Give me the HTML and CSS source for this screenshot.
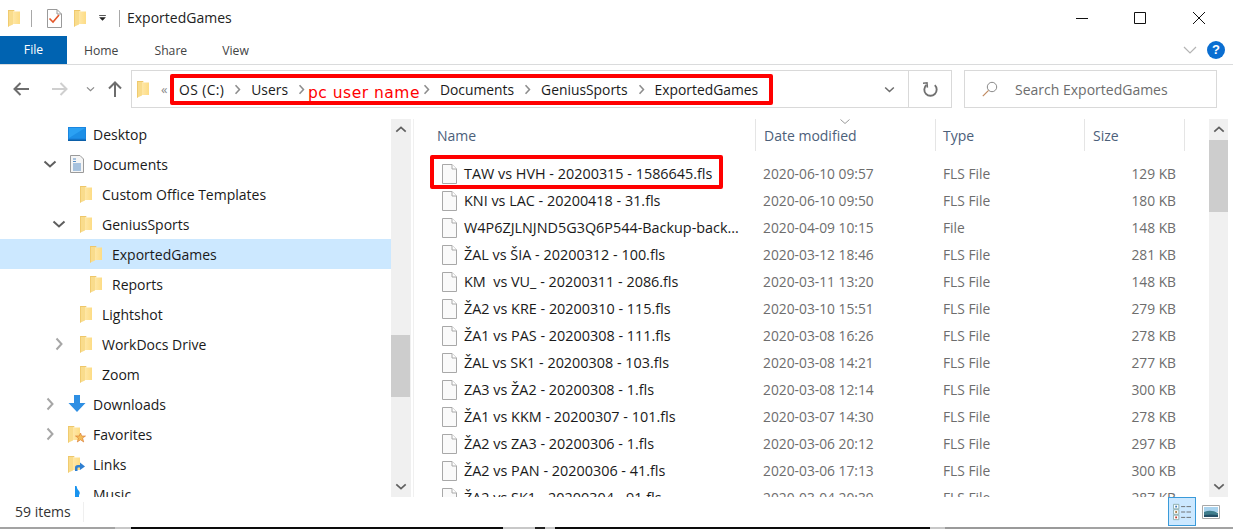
FILE: index.html
```html
<!DOCTYPE html>
<html lang="en">
<head>
<meta charset="utf-8">
<title>ExportedGames</title>
<link rel="stylesheet" href="styles.css">
</head>
<body>
<svg class="defs" width="0" height="0" aria-hidden="true">
  <defs>
    <linearGradient id="fg" x1="0" y1="0" x2="1" y2="0"><stop offset="0" stop-color="#ffeab0"/><stop offset="1" stop-color="#fddc85"/></linearGradient>
    <symbol id="folder" viewBox="0 0 12 18">
      <path d="M3 2.5H12V15H3z" fill="url(#fg)"/>
      <path d="M0 1H6L6.6 2.5H5V15.5L0 17.8z" fill="#f9dc8c"/>
      <path d="M0 1H6L6.4 2H.8V17.4L0 17.8z" fill="#eec76a"/>
    </symbol>
    <symbol id="file" viewBox="0 0 15 20">
      <path d="M.5.5H10L14.5 5V19.5H.5z" fill="#fafafa" stroke="#a8a8a8"/>
      <path d="M10 .5V5H14.5" fill="#fff" stroke="#a8a8a8"/>
    </symbol>
    <symbol id="down" viewBox="0 0 14 8"><path d="M1.5 1.5L7 6.5L12.5 1.5" fill="none" stroke="currentColor" stroke-width="2"/></symbol>
    <symbol id="right" viewBox="0 0 8 14"><path d="M1.5 1.5L6.5 7L1.5 12.5" fill="none" stroke="currentColor" stroke-width="2"/></symbol>
  </defs>
</svg>

<header class="titlebar">
  <svg class="qa-folder first"><use href="#folder"/></svg>
  <span class="qa-sep sep-a"></span>
  <svg class="qa-check" viewBox="0 0 15 19">
    <path d="M.5.5H10L14.5 5V18.5H.5z" fill="#fff" stroke="#9a9a9a"/>
    <path d="M10 .5V5H14.5" fill="none" stroke="#9a9a9a"/>
    <path d="M2.5 9.5L6 13L12 6" fill="none" stroke="#e4572a" stroke-width="1.6"/>
  </svg>
  <svg class="qa-folder second"><use href="#folder"/></svg>
  <svg class="qa-drop" viewBox="0 0 9 8"><path d="M0 0H9V1H0zM0 3H9L4.5 7.5z" fill="#222"/></svg>
  <span class="qa-sep sep-b"></span>
  <span class="title">ExportedGames</span>
  <div class="winbtns">
    <svg class="win win-min" viewBox="0 0 12 12"><path d="M0 6.5H12" stroke="#111" stroke-width="1"/></svg>
    <svg class="win win-max" viewBox="0 0 12 12"><path d="M.5.5H11.5V11.5H.5z" fill="none" stroke="#111"/></svg>
    <svg class="win win-close" viewBox="0 0 12 12"><path d="M0 0L12 12M12 0L0 12" stroke="#111" stroke-width="1"/></svg>
  </div>
</header>

<nav class="tabs">
  <span class="tab tab-file">File</span>
  <span class="tab tab-home">Home</span>
  <span class="tab tab-share">Share</span>
  <span class="tab tab-view">View</span>
  <svg class="ribbon-chev" viewBox="0 0 14 8"><path d="M1 1L7 7L13 1" fill="none" stroke="#b4b4b4" stroke-width="1.2"/></svg>
  <span class="help">?</span>
</nav>

<section class="addr">
  <svg class="arrow a-back" viewBox="0 0 16 14"><path d="M16 7H1.5M7.5 1L1.5 7L7.5 13" fill="none" stroke="#6d6d6d" stroke-width="2"/></svg>
  <svg class="arrow a-fwd" viewBox="0 0 16 14"><path d="M0 7H14.5M8.5 1L14.5 7L8.5 13" fill="none" stroke="#cfcfcf" stroke-width="2"/></svg>
  <svg class="a-recent"><use href="#down"/></svg>
  <svg class="a-up" viewBox="0 0 14 16"><path d="M7 16V1.5M1 7.5L7 1.5L13 7.5" fill="none" stroke="#6d6d6d" stroke-width="2"/></svg>
  <div class="crumbs">
    <svg class="crumb-folder"><use href="#folder"/></svg>
    <span class="more">«</span>
    <span class="crumb c-os">OS (C:)</span>
    <svg class="crumb-chev"><use href="#right"/></svg>
    <span class="crumb">Users</span>
    <svg class="crumb-chev"><use href="#right"/></svg>
    <span class="pcuser">pc user name</span>
    <svg class="crumb-chev"><use href="#right"/></svg>
    <span class="crumb">Documents</span>
    <svg class="crumb-chev"><use href="#right"/></svg>
    <span class="crumb">GeniusSports</span>
    <svg class="crumb-chev"><use href="#right"/></svg>
    <span class="crumb">ExportedGames</span>
    <svg class="crumb-drop"><use href="#down"/></svg>
    <span class="refresh">
      <svg viewBox="0 0 16 16"><path d="M12.6 3.4A6.6 6.6 0 1 1 3.6 3.2" fill="none" stroke="#707070" stroke-width="2"/><path d="M8.5 .5L13.8 .8L13.5 6" fill="none" stroke="#707070" stroke-width="1.6" transform="translate(-9.5 2) rotate(-8)"/></svg>
    </span>
  </div>
  <div class="search">
    <svg class="search-ico" viewBox="0 0 16 16"><circle cx="10" cy="6" r="4.7" fill="none" stroke="#8a8a8a"/><path d="M6.6 9.4L.8 15.2" stroke="#c08a60" stroke-width="1.2"/></svg>
    <span>Search ExportedGames</span>
  </div>
</section>

<main class="main">
  <aside class="tree">
    <div class="row l1"><span class="twist"></span>
      <svg class="ico" viewBox="0 0 18 14"><path d="M0 0H18V13H0z" fill="#1a86e0"/><path d="M1 1H17V11H1z" fill="#2ba1f3"/><path d="M1 11L17 1V11z" fill="#1d8fe6"/><path d="M0 12.5H18V14H0z" fill="#0b5fa8"/></svg>
      <span class="label">Desktop</span></div>
    <div class="row l1"><svg class="twist open"><use href="#down"/></svg>
      <svg class="ico" viewBox="0 0 18 18"><path d="M2.5.5H12L15.5 4V17.5H2.5z" fill="#f5f5f5" stroke="#9a9a9a"/><path d="M5 4H8M5 6.5H8M5 9H13M5 11H13M5 13H13M5 15H13" stroke="#5a8fc6"/></svg>
      <span class="label">Documents</span></div>
    <div class="row l2"><span class="twist"></span><svg class="ico"><use href="#folder"/></svg><span class="label">Custom Office Templates</span></div>
    <div class="row l2"><svg class="twist open"><use href="#down"/></svg><svg class="ico"><use href="#folder"/></svg><span class="label">GeniusSports</span></div>
    <div class="row l3 selected"><span class="twist"></span><svg class="ico"><use href="#folder"/></svg><span class="label">ExportedGames</span></div>
    <div class="row l3"><span class="twist"></span><svg class="ico"><use href="#folder"/></svg><span class="label">Reports</span></div>
    <div class="row l2"><span class="twist"></span><svg class="ico"><use href="#folder"/></svg><span class="label">Lightshot</span></div>
    <div class="row l2"><svg class="twist closed"><use href="#right"/></svg><svg class="ico"><use href="#folder"/></svg><span class="label">WorkDocs Drive</span></div>
    <div class="row l2"><span class="twist"></span><svg class="ico"><use href="#folder"/></svg><span class="label">Zoom</span></div>
    <div class="row l1"><svg class="twist closed"><use href="#right"/></svg>
      <svg class="ico" viewBox="0 0 18 18"><path d="M6 0H12V8H17.5L9 17L.5 8H6z" fill="#2f8fe3"/></svg>
      <span class="label">Downloads</span></div>
    <div class="row l1"><svg class="twist closed"><use href="#right"/></svg>
      <svg class="ico" viewBox="0 0 18 18"><use href="#folder" width="12" height="18"/><path d="M12.5 8L13.8 11H17.5L14.6 13L15.7 17L12.5 14.8L9.3 17L10.4 13L7.5 11H11.2z" fill="#f3bd5a" stroke="#d9762c" stroke-width=".6"/></svg>
      <span class="label">Favorites</span></div>
    <div class="row l1"><span class="twist"></span>
      <svg class="ico" viewBox="0 0 18 18"><use href="#folder" width="12" height="18"/><path d="M7 16V12.5Q7 10 10 10H12V7.5L17 11.5L12 15V12.5H10Q9.5 12.5 9.5 13.5V16z" fill="#2f7fd1"/></svg>
      <span class="label">Links</span></div>
    <div class="row l1"><span class="twist"></span>
      <svg class="ico" viewBox="0 0 18 18"><path d="M7 1V14H11V10Q12.5 8 11 6Q9 4.5 8.5 1z" fill="#1993ef"/></svg>
      <span class="label">Music</span></div>
  </aside>
  <div class="scroll left-scroll">
    <span class="sb-btn"><svg viewBox="0 0 14 8"><path d="M1.5 6.5L7 1.5L12.5 6.5" fill="none" stroke="#606060" stroke-width="2"/></svg></span>
    <span class="thumb"></span>
    <span class="sb-btn"><svg viewBox="0 0 14 8"><path d="M1.5 1.5L7 6.5L12.5 1.5" fill="none" stroke="#606060" stroke-width="2"/></svg></span>
  </div>
  <div class="pane">
    <div class="list">
      <div class="head">
        <span class="h h-name">Name</span>
        <span class="h h-date">Date modified<svg class="sort" viewBox="0 0 10 5"><path d="M.5.5L5 4.5L9.5.5" fill="none" stroke="#9a9a9a"/></svg></span>
        <span class="h h-type">Type</span>
        <span class="h h-size">Size</span>
      </div>
      <div class="file"><span class="fname"><svg class="fico"><use href="#file"/></svg>TAW vs HVH - 20200315 - 1586645.fls</span><span class="meta">2020-06-10 09:57</span><span class="meta">FLS File</span><span class="meta size">129 KB</span></div>
      <div class="file"><span class="fname"><svg class="fico"><use href="#file"/></svg>KNI vs LAC - 20200418 - 31.fls</span><span class="meta">2020-06-10 09:50</span><span class="meta">FLS File</span><span class="meta size">180 KB</span></div>
      <div class="file"><span class="fname"><svg class="fico"><use href="#file"/></svg>W4P6ZJLNJND5G3Q6P544-Backup-back...</span><span class="meta">2020-04-09 10:15</span><span class="meta">File</span><span class="meta size">148 KB</span></div>
      <div class="file"><span class="fname"><svg class="fico"><use href="#file"/></svg>ŽAL vs ŠIA - 20200312 - 100.fls</span><span class="meta">2020-03-12 18:46</span><span class="meta">FLS File</span><span class="meta size">281 KB</span></div>
      <div class="file"><span class="fname"><svg class="fico"><use href="#file"/></svg>KM&nbsp; vs VU_ - 20200311 - 2086.fls</span><span class="meta">2020-03-11 13:20</span><span class="meta">FLS File</span><span class="meta size">148 KB</span></div>
      <div class="file"><span class="fname"><svg class="fico"><use href="#file"/></svg>ŽA2 vs KRE - 20200310 - 115.fls</span><span class="meta">2020-03-10 15:51</span><span class="meta">FLS File</span><span class="meta size">279 KB</span></div>
      <div class="file"><span class="fname"><svg class="fico"><use href="#file"/></svg>ŽA1 vs PAS - 20200308 - 111.fls</span><span class="meta">2020-03-08 16:26</span><span class="meta">FLS File</span><span class="meta size">278 KB</span></div>
      <div class="file"><span class="fname"><svg class="fico"><use href="#file"/></svg>ŽAL vs SK1 - 20200308 - 103.fls</span><span class="meta">2020-03-08 14:21</span><span class="meta">FLS File</span><span class="meta size">277 KB</span></div>
      <div class="file"><span class="fname"><svg class="fico"><use href="#file"/></svg>ZA3 vs ŽA2 - 20200308 - 1.fls</span><span class="meta">2020-03-08 12:14</span><span class="meta">FLS File</span><span class="meta size">300 KB</span></div>
      <div class="file"><span class="fname"><svg class="fico"><use href="#file"/></svg>ŽA1 vs KKM - 20200307 - 101.fls</span><span class="meta">2020-03-07 14:30</span><span class="meta">FLS File</span><span class="meta size">278 KB</span></div>
      <div class="file"><span class="fname"><svg class="fico"><use href="#file"/></svg>ŽA2 vs ZA3 - 20200306 - 1.fls</span><span class="meta">2020-03-06 20:12</span><span class="meta">FLS File</span><span class="meta size">297 KB</span></div>
      <div class="file"><span class="fname"><svg class="fico"><use href="#file"/></svg>ŽA2 vs PAN - 20200306 - 41.fls</span><span class="meta">2020-03-06 17:13</span><span class="meta">FLS File</span><span class="meta size">300 KB</span></div>
      <div class="file"><span class="fname"><svg class="fico"><use href="#file"/></svg>ŽA2 vs SK1 - 20200304 - 91.fls</span><span class="meta">2020-03-04 20:39</span><span class="meta">FLS File</span><span class="meta size">287 KB</span></div>
    </div>
    <div class="scroll right-scroll">
      <span class="sb-btn"><svg viewBox="0 0 14 8"><path d="M1.5 6.5L7 1.5L12.5 6.5" fill="none" stroke="#606060" stroke-width="2"/></svg></span>
      <span class="thumb"></span>
      <span class="sb-btn"><svg viewBox="0 0 14 8"><path d="M1.5 1.5L7 6.5L12.5 1.5" fill="none" stroke="#606060" stroke-width="2"/></svg></span>
    </div>
  </div>
</main>

<footer class="status">
  <span class="count">59 items</span>
  <span class="status-sep"></span>
  <span class="view-btn active">
    <svg viewBox="0 0 20 20"><path d="M.5 1.5H6.5V6.5H.5zM.5 7.5H6.5V12.5H.5zM.5 13.5H6.5V18.5H.5z" fill="#fff" stroke="#8aa"/><path d="M2.5 3H4.5V5H2.5z" fill="#3a78b8"/><path d="M2.5 9H4.5V11H2.5z" fill="#a5763a"/><path d="M2.5 15H4.5V17H2.5z" fill="#c0392b"/><path d="M9 4H13.5M15 4H20M9 10H13.5M15 10H20M9 16H13.5M15 16H20" stroke="#666"/></svg>
  </span>
  <span class="view-btn">
    <svg viewBox="0 0 18 14"><path d="M.5.5H17.5V13.5H.5z" fill="#fff" stroke="#a8a8a8"/><path d="M2 2H16V7H2z" fill="#a9d3ee"/><path d="M2 7Q9 4 16 8V12H2z" fill="#3f7d8c"/><path d="M2 10Q9 9 16 10V12H2z" fill="#244f66"/></svg>
  </span>
</footer>

<div class="edge">
  <span class="e e1"></span><span class="e e2"></span><span class="e e3"></span><span class="e e4"></span><span class="e e5"></span><span class="e e6"></span><span class="e e7"></span><span class="e e8"></span><span class="e e9"></span><span class="e e10"></span>
</div>

<div class="redbox box-addr"></div>
<div class="redbox box-file"></div>
</body>
</html>
```

FILE: styles.css
```css
* { box-sizing: border-box; }
html, body { margin: 0; padding: 0; }
body {
  position: relative;
  width: 1233px;
  height: 529px;
  overflow: hidden;
  background: #fff;
  color: #1a1a1a;
  font-family: "Open Sans", "Noto Sans", sans-serif;
  font-size: 14px;
}
.defs { position: absolute; }
svg { display: block; flex: none; }

/* title bar */
.titlebar { display: flex; align-items: center; height: 36px; }
.qa-folder { width: 12px; height: 18px; }
.qa-folder.first { margin-left: 8px; }
.qa-folder.second { margin-left: 12px; }
.qa-sep { width: 1px; height: 17px; background: #a8a8a8; }
.sep-a { margin-left: 11px; }
.qa-check { width: 15px; height: 19px; margin-left: 15px; }
.qa-drop { width: 7px; height: 6px; margin-left: 13px; }
.sep-b { margin-left: 13px; }
.title { margin-top: -2px; margin-left: 7px; font-size: 14px; color: #222; }
.winbtns { display: flex; margin-left: auto; margin-right: 28px; }
.win { width: 12px; height: 12px; }
.win-max { margin-left: 46px; }
.win-close { margin-left: 47px; }

/* tabs */
.tabs { display: flex; align-items: center; height: 29px; border-bottom: 1px solid #dadbdc; font-size: 12.2px; color: #444; }
.tab { display: block; }
.tab-file { width: 67px; height: 28px; line-height: 28px; text-align: center; background: #0063b1; color: #fff; }
.tab-home { margin-left: 17px; }
.tab-share { margin-left: 36px; }
.tab-view { margin-left: 35px; }
.ribbon-chev { width: 14px; height: 8px; margin-left: auto; }
.help { width: 18px; height: 18px; margin: 0 8px 0 10px; border-radius: 50%; background: #0a6ed1; color: #fff; font: bold 13px/18px "Liberation Sans", sans-serif; text-align: center; }

/* address row */
.addr { display: flex; align-items: center; height: 53px; padding-bottom: 5px; }
.arrow { width: 16px; height: 14px; }
.a-back { margin-left: 13px; }
.a-fwd { margin-left: 23px; }
.a-recent { width: 9px; height: 6px; margin-left: 18px; color: #8a8a8a; }
.a-up { width: 14px; height: 16px; margin-left: 13px; }
.crumbs {
  display: flex; align-items: center;
  width: 821px; height: 38px; margin-left: 9px; padding-left: 5px;
  border: 1px solid #d9d9d9; font-size: 13.85px; color: #1a1a1a;
}
.crumb-folder { width: 12px; height: 18px; }
.more { margin-left: 12px; width: 18px; color: #8a8a8a; font-size: 13px; }
.crumb { white-space: nowrap; }
.c-os { letter-spacing: .4px; }
.crumb-chev { width: 7px; height: 11px; margin: 0 10px; color: #8d8d8d; }
.pcuser { width: 115px; margin-left: -7px; margin-right: -10px; padding-top: 8px; color: #f00; font-family: "DejaVu Sans", sans-serif; font-size: 15.5px; letter-spacing: .5px; white-space: nowrap; }
.crumb-drop { width: 11px; height: 7px; margin-left: auto; margin-right: 13px; color: #6d6d6d; }
.refresh { display: flex; align-items: center; justify-content: center; width: 43px; height: 36px; border-left: 1px solid #d9d9d9; }
.refresh svg { width: 15px; height: 15px; }
.search {
  display: flex; align-items: center;
  width: 253px; height: 38px; margin-left: 12px; padding-left: 17px;
  border: 1px solid #d9d9d9; color: #6d6d6d; font-size: 14px;
}
.search-ico { width: 16px; height: 16px; margin-right: 17px; }

/* main */
.main { display: flex; height: 379px; padding-top: 1px; }
.tree { width: 391px; height: 378px; overflow: hidden; }
.row { display: flex; align-items: center; height: 30px; font-size: 14px; white-space: nowrap; }
.l1 { padding-left: 43px; }
.l2 { padding-left: 52px; }
.l3 { padding-left: 62px; }
.selected { background: #cce8ff; }
.twist { display: block; width: 14px; }
.twist.open { height: 8px; color: #5e5e5e; }
.twist.closed { height: 14px; color: #a6a6a6; }
.ico { width: 18px; height: 18px; margin-left: 11px; }
.label { margin-left: 7px; }

.scroll { display: flex; flex-direction: column; width: 20px; height: 378px; background: #f0f0f0; }
.sb-btn { display: flex; align-items: center; justify-content: center; flex: none; height: 21px; }
.sb-btn svg { width: 12px; height: 7px; }
.thumb { display: block; width: 19px; background: #cdcdcd; }
.left-scroll .thumb { height: 62px; margin-top: 195px; margin-bottom: 79px; }
.left-scroll { margin-right: 2px; }
.right-scroll { flex: none; width: 19px; margin-right: 5px; }
.right-scroll .thumb { height: 72px; margin-bottom: 264px; }
.pane { display: flex; flex: 1; border-left: 1px solid #f0f0f0; }
.list { flex: 1; height: 378px; overflow: hidden; }
.head { display: grid; grid-template-columns: 342px 180px 149px 100px; height: 41px; }
.h { position: relative; height: 32px; padding-left: 8px; line-height: 33px; border-right: 1px solid #e5e5e5; color: #4c607a; font-size: 14px; }
.h-name { padding-left: 23px; }
.h-type { padding-left: 7px; }
.sort { position: absolute; top: 0; left: 84px; width: 10px; height: 5px; }
.file { display: grid; grid-template-columns: 349px 180px 150px 83px 1fr; align-items: center; height: 27px; white-space: nowrap; font-size: 13.8px; }
.fname { display: flex; align-items: center; padding-left: 28px; color: #1a1a1a; font-size: 14.4px; }
.fico { width: 15px; height: 20px; margin-right: 7px; }
.meta { color: #6d6d6d; }
.size { text-align: right; }

/* status */
.status { display: flex; align-items: center; height: 30px; padding-left: 15px; padding-bottom: 1px; font-size: 14px; }
.count { color: #333; }
.status-sep { width: 1px; height: 20px; margin-left: 12px; background: #efefef; }
.view-btn { display: flex; align-items: center; justify-content: center; height: 29px; }
.view-btn.active { width: 28px; margin-left: auto; background: #cce8ff; border: 1px solid #3a9ad9; }
.view-btn.active svg { width: 18px; height: 20px; }
.view-btn:last-child { width: 37px; padding-right: 8px; }
.view-btn:last-child svg { width: 18px; height: 14px; }

/* strip of what lies behind the window */
.edge { display: flex; height: 3px; }
.e { display: block; height: 3px; }
.e1 { width: 115px; background: #a3a3a3; }
.e2 { width: 16px; background: #c8c8c8; }
.e3 { width: 372px; background: #0c0c0c; }
.e4 { width: 32px; background: #c8c8c8; }
.e5 { width: 10px; background: #222; }
.e6 { width: 10px; background: #c8c8c8; }
.e7 { width: 375px; background: #0c0c0c; }
.e8 { width: 15px; background: #c8c8c8; }
.e9 { width: 135px; background: #9a9a9a; }
.e10 { flex: 1; background: #a3a3a3; }

/* red annotation boxes */
.redbox { position: absolute; border: 4px solid #f00; border-radius: 2px; }
.box-addr { left: 170px; top: 74px; width: 603px; height: 31px; }
.box-file { left: 430px; top: 155px; width: 293px; height: 34px; }
```
